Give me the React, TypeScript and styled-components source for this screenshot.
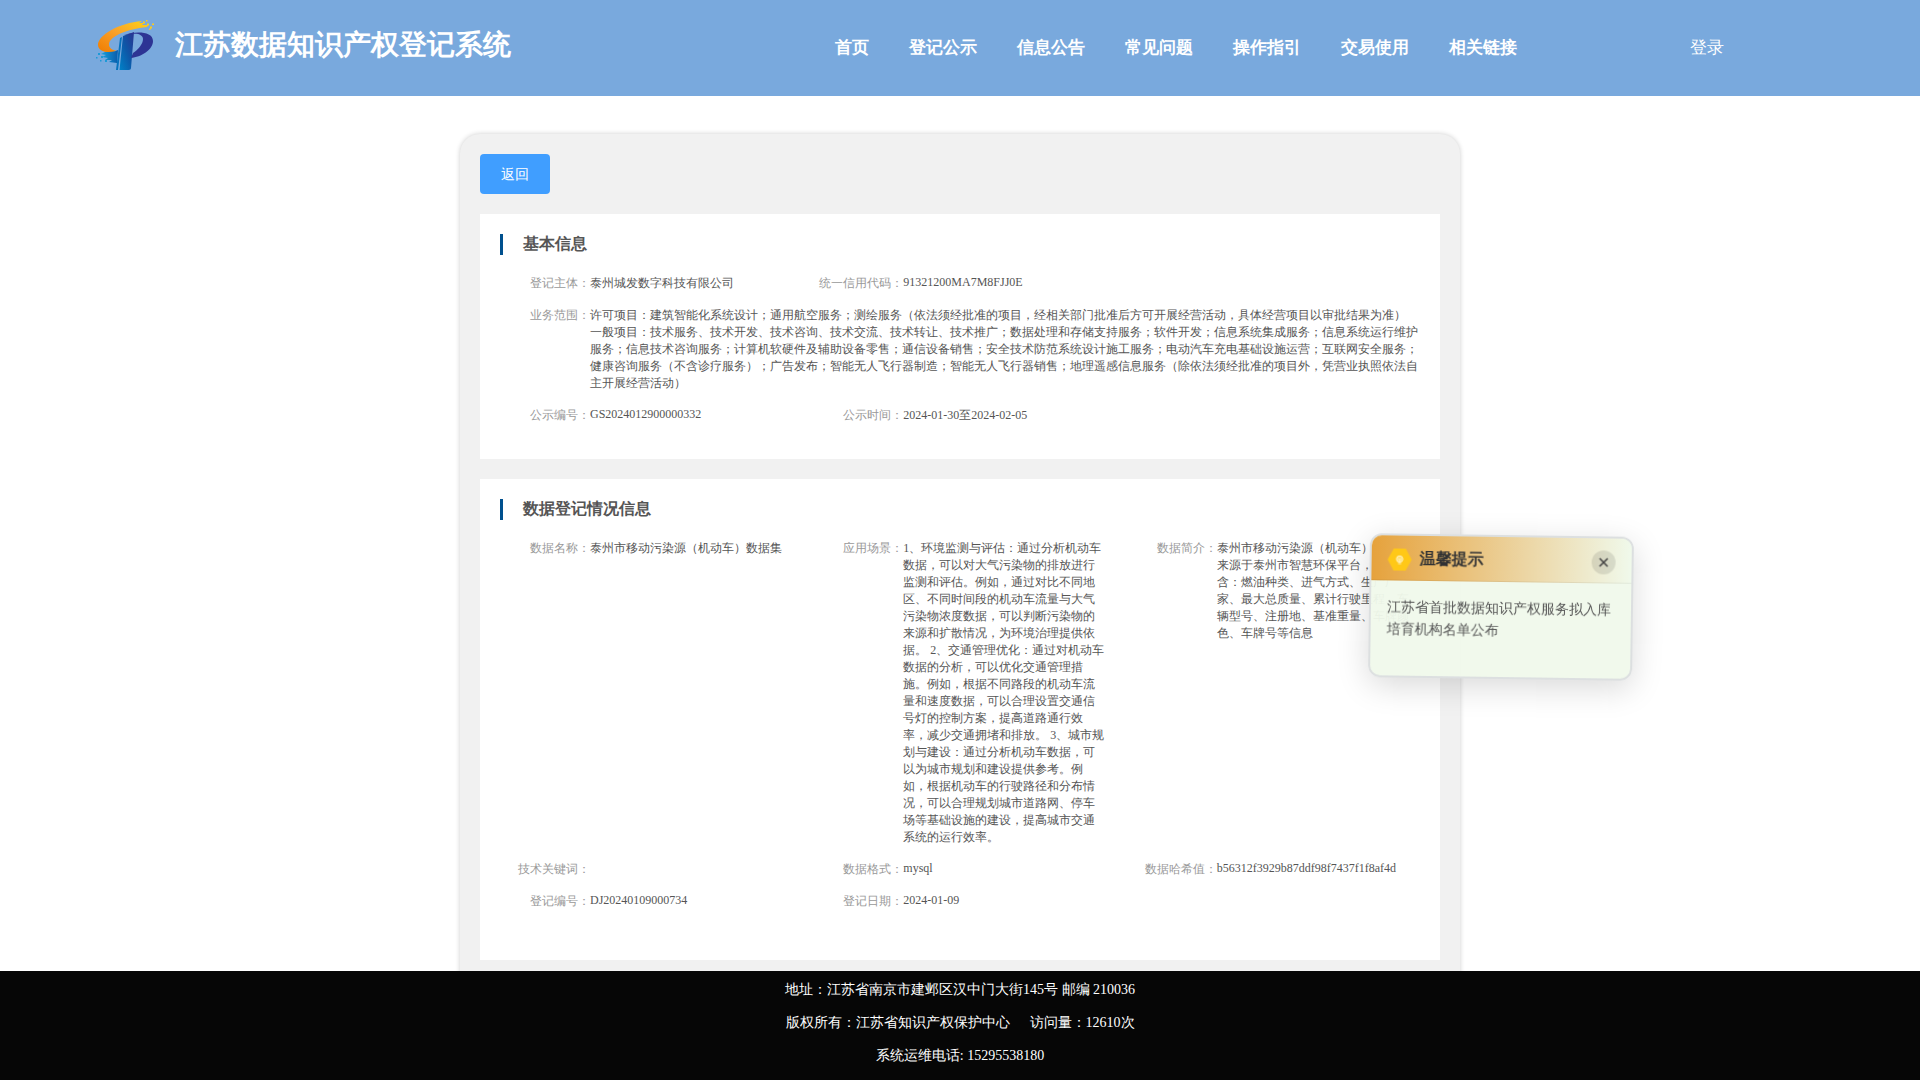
import React from "react";
import styled, { createGlobalStyle, css } from "styled-components";

const GlobalStyle = createGlobalStyle`
  * { box-sizing: border-box; }
  body {
    margin: 0;
    background: #fff;
    color: #555;
    font-family: "Liberation Serif", serif;
  }
`;

const Page = styled.div`
  height: 100vh;
  display: flex;
  flex-direction: column;
  overflow: hidden;
`;

const Header = styled.header`
  flex: none;
  height: 96px;
  display: flex;
  background: #79a9dd;
  color: #fff;
`;

const Brand = styled.div`
  flex: none;
  width: 835px;
  height: 90px;
  padding-left: 95px;
  display: flex;
  align-items: center;
`;

const Logo = styled.svg`
  width: 62px;
  height: 54px;
  margin-right: 18px;
`;

const SiteName = styled.h1`
  margin: 0;
  font-size: 28px;
  line-height: 38px;
  font-weight: bold;
`;

const Nav = styled.nav`
  display: flex;
  align-items: center;
  gap: 40px;
  font-size: 17px;
  font-weight: bold;
  height: 94px;
`;

const NavLink = styled.a`
  color: #fff;
`;

const Login = styled.a`
  height: 96px;
  line-height: 96px;
  font-size: 17px;
  margin-left: auto;
  margin-right: 196px;
`;

const Main = styled.main`
  flex: 1;
  min-height: 0;
  padding-top: 38px;
  overflow: hidden;
`;

const Panel = styled.section`
  width: 1000px;
  height: 1000px;
  margin: 0 auto;
  padding: 20px;
  display: flex;
  flex-direction: column;
  align-items: stretch;
  gap: 20px;
  background: #f1f1f1;
  border-radius: 20px;
  box-shadow: 0 0 5px rgba(0, 0, 0, 0.2);
`;

const BackButton = styled.button`
  flex: none;
  align-self: flex-start;
  width: 70px;
  height: 40px;
  padding: 1px 0 0;
  border: 0;
  border-radius: 4px;
  background: #409eff;
  color: #fff;
  font-family: inherit;
  font-size: 14px;
`;

const Card = styled.article<{ $height: number }>`
  flex: none;
  height: ${(p) => p.$height}px;
  padding: 20px 0 0 20px;
  background: #fff;
`;

const CardTitle = styled.h2`
  height: 21px;
  margin: 0 0 20px;
  padding-left: 20px;
  border-left: 3px solid #00508e;
  font-size: 16px;
  line-height: 20px;
  color: #555;
`;

const Fields = styled.dl`
  margin: 0;
  width: 940px;
  display: grid;
  grid-template-columns: repeat(3, 1fr);
  row-gap: 15px;
`;

const Field = styled.div<{ $wide?: boolean }>`
  display: flex;
  font-size: 12px;
  line-height: 17px;
  ${(p) => p.$wide && css`grid-column: 1 / -1;`}
`;

const Label = styled.dt`
  flex: none;
  width: 90px;
  text-align: right;
  white-space: nowrap;
  color: #999;
`;

const Value = styled.dd<{ $latin?: boolean; $wide?: boolean }>`
  margin: ${(p) => (p.$latin ? "-1px" : "0")} 0 0;
  width: ${(p) => (p.$wide ? 830 : 203.3)}px;
  color: #555;
`;

const Footer = styled.footer`
  flex: none;
  height: 109px;
  padding-top: 2px;
  background: #060606;
  color: #fff;
  font-size: 14px;
  line-height: 33px;
  text-align: center;
`;

const FooterLine = styled.div`
  display: flex;
  justify-content: center;
  gap: 20px;
`;

const Notice = styled.aside`
  position: fixed;
  left: 1369px;
  top: 535px;
  width: 264px;
  height: 144px;
  border: 2px solid #dcdfe0;
  border-radius: 12px;
  overflow: hidden;
  background: rgba(240, 249, 235, 0.95);
  box-shadow: 0 8px 32px rgba(0, 0, 0, 0.15);
  transform: rotate(0.8deg);
`;

const NoticeHead = styled.div`
  height: 45px;
  padding: 3px 16px 0 16px;
  display: flex;
  align-items: center;
  background: linear-gradient(90deg, #e6a23c, #f0f9eb);
  border-bottom: 1px solid rgba(0, 0, 0, 0.06);
`;

const NoticeIcon = styled.svg`
  width: 24px;
  height: 24px;
  margin-right: 8px;
`;

const NoticeTitle = styled.strong`
  flex: 1;
  font-size: 16px;
  color: #303133;
`;

const Close = styled.button`
  width: 24px;
  height: 24px;
  padding: 0;
  border: 0;
  border-radius: 50%;
  display: grid;
  place-items: center;
  background: rgba(0, 0, 0, 0.1);
`;

const NoticeText = styled.p`
  margin: 0;
  padding: 16px;
  font-size: 14px;
  line-height: 22.4px;
  color: #555;
`;

type Item = { label: string; value: string; latin?: boolean; wide?: boolean };

const basic: Item[] = [
  { label: "登记主体", value: "泰州城发数字科技有限公司" },
  { label: "统一信用代码", value: "91321200MA7M8FJJ0E", latin: true },
  {
    label: "业务范围",
    wide: true,
    value:
      "许可项目：建筑智能化系统设计；通用航空服务；测绘服务（依法须经批准的项目，经相关部门批准后方可开展经营活动，具体经营项目以审批结果为准） 一般项目：技术服务、技术开发、技术咨询、技术交流、技术转让、技术推广；数据处理和存储支持服务；软件开发；信息系统集成服务；信息系统运行维护服务；信息技术咨询服务；计算机软硬件及辅助设备零售；通信设备销售；安全技术防范系统设计施工服务；电动汽车充电基础设施运营；互联网安全服务；健康咨询服务（不含诊疗服务）；广告发布；智能无人飞行器制造；智能无人飞行器销售；地理遥感信息服务（除依法须经批准的项目外，凭营业执照依法自主开展经营活动）",
  },
  { label: "公示编号", value: "GS2024012900000332", latin: true },
  { label: "公示时间", value: "2024-01-30至2024-02-05" },
];

const registration: Item[] = [
  { label: "数据名称", value: "泰州市移动污染源（机动车）数据集" },
  {
    label: "应用场景",
    value:
      "1、环境监测与评估：通过分析机动车数据，可以对大气污染物的排放进行监测和评估。例如，通过对比不同地区、不同时间段的机动车流量与大气污染物浓度数据，可以判断污染物的来源和扩散情况，为环境治理提供依据。 2、交通管理优化：通过对机动车数据的分析，可以优化交通管理措施。例如，根据不同路段的机动车流量和速度数据，可以合理设置交通信号灯的控制方案，提高道路通行效率，减少交通拥堵和排放。 3、城市规划与建设：通过分析机动车数据，可以为城市规划和建设提供参考。例如，根据机动车的行驶路径和分布情况，可以合理规划城市道路网、停车场等基础设施的建设，提高城市交通系统的运行效率。",
  },
  {
    label: "数据简介",
    value:
      "泰州市移动污染源（机动车）数据集来源于泰州市智慧环保平台，数据包含：燃油种类、进气方式、生产厂家、最大总质量、累计行驶里程、车辆型号、注册地、基准重量、车牌颜色、车牌号等信息",
  },
  { label: "技术关键词", value: "" },
  { label: "数据格式", value: "mysql", latin: true },
  { label: "数据哈希值", value: "b56312f3929b87ddf98f7437f1f8af4d", latin: true },
  { label: "登记编号", value: "DJ20240109000734", latin: true },
  { label: "登记日期", value: "2024-01-09", latin: true },
];

const FieldList = ({ items }: { items: Item[] }) => (
  <Fields>
    {items.map((i) => (
      <Field key={i.label} $wide={i.wide}>
        <Label>{i.label}：</Label>
        <Value $latin={i.latin} $wide={i.wide}>{i.value}</Value>
      </Field>
    ))}
  </Fields>
);

const BrandLogo = () => (
  <Logo viewBox="0 0 62 54">
    <defs>
      <linearGradient id="gold" x1="0" y1="1" x2="1" y2="0">
        <stop offset="0" stopColor="#f07c00" />
        <stop offset="0.5" stopColor="#f9a12a" />
        <stop offset="1" stopColor="#fdd316" />
      </linearGradient>
      <linearGradient id="stem" x1="0" y1="1" x2="1" y2="0">
        <stop offset="0" stopColor="#0082c8" />
        <stop offset="0.5" stopColor="#0d58a8" />
        <stop offset="1" stopColor="#2b3391" />
      </linearGradient>
      <linearGradient id="wing" x1="0" y1="0" x2="1" y2="0">
        <stop offset="0" stopColor="#16a0dc" />
        <stop offset="1" stopColor="#0b5cab" />
      </linearGradient>
    </defs>
    <path fill="url(#gold)" d="M22 33C12 36 3 33 3 27C3 17 24 5 47 3L44 5L49 5L47 7L53 7L52 9C32 11 15 18 14 26C14 30 17 32 22 33Z" />
    <path fill="#fdcb1b" d="M49 2h2v2h-2zM53 4h2v2h-2zM56 7h2v2h-2zM58 4h2v1.5h-2zM52 0.500h1.500v1.500h-1.500zM55 9h1.500v1.500h-1.500z" transform="translate(-1 1.500)" />
    <path fill="url(#wing)" d="M23 32L22 45L14 44L17 42L10 42L13 40L7 39L11 37L6 36L10 34C15 34 19 34 23 32Z" />
    <path fill="#1c9ad8" d="M3 35h2v2h-2zM6 38h2v2h-2zM1 39h1.500v1.500h-1.500zM10 42h2v2h-2zM5 42h1.500v1.500h-1.500z" />
    <path fill="#0872bd" d="M25 20L27 19L23 52H21Z" />
    <path fill="url(#stem)" d="M28 18L39 14L36 50C36 52 34 52 32 52H24.500Z" />
    <path fill="#2d3494" d="M29 17C40 13 58 13 58 23C58 32 46 39 36 40L38 35C43 32 48 26 48 21C48 17 43 15 37 16Z" />
  </Logo>
);

export default function App() {
  return (
    <Page>
      <GlobalStyle />
      <Header>
        <Brand>
          <BrandLogo />
          <SiteName>江苏数据知识产权登记系统</SiteName>
        </Brand>
        <Nav>
          {["首页", "登记公示", "信息公告", "常见问题", "操作指引", "交易使用", "相关链接"].map((t) => (
            <NavLink key={t}>{t}</NavLink>
          ))}
        </Nav>
        <Login>登录</Login>
      </Header>
      <Main>
        <Panel>
          <BackButton>返回</BackButton>
          <Card $height={245}>
            <CardTitle>基本信息</CardTitle>
            <FieldList items={basic} />
          </Card>
          <Card $height={481}>
            <CardTitle>数据登记情况信息</CardTitle>
            <FieldList items={registration} />
          </Card>
        </Panel>
      </Main>
      <Footer>
        <FooterLine>地址：江苏省南京市建邺区汉中门大街145号 邮编 210036</FooterLine>
        <FooterLine>
          <span>版权所有：江苏省知识产权保护中心</span>
          <span>访问量：12610次</span>
        </FooterLine>
        <FooterLine>系统运维电话: 15295538180</FooterLine>
      </Footer>
      <Notice>
        <NoticeHead>
          <NoticeIcon viewBox="0 0 24 24">
            <path fill="#ffc817" d="M6 1H18L24 12L18 23H6L0 12Z" />
            <circle cx="12" cy="11.500" r="3.200" fill="#ffdf70" stroke="#fff3c4" />
            <path d="M10.500 11l1.500 1.500l1.500-1.500M12 12.500v2M10.500 16h3" fill="none" stroke="#fff3c4" />
          </NoticeIcon>
          <NoticeTitle>温馨提示</NoticeTitle>
          <Close>
            <svg width="10" height="10" viewBox="0 0 10 10">
              <path d="M1 1L9 9M9 1L1 9" stroke="#444" strokeWidth="1.600" />
            </svg>
          </Close>
        </NoticeHead>
        <NoticeText>江苏省首批数据知识产权服务拟入库培育机构名单公布</NoticeText>
      </Notice>
    </Page>
  );
}
